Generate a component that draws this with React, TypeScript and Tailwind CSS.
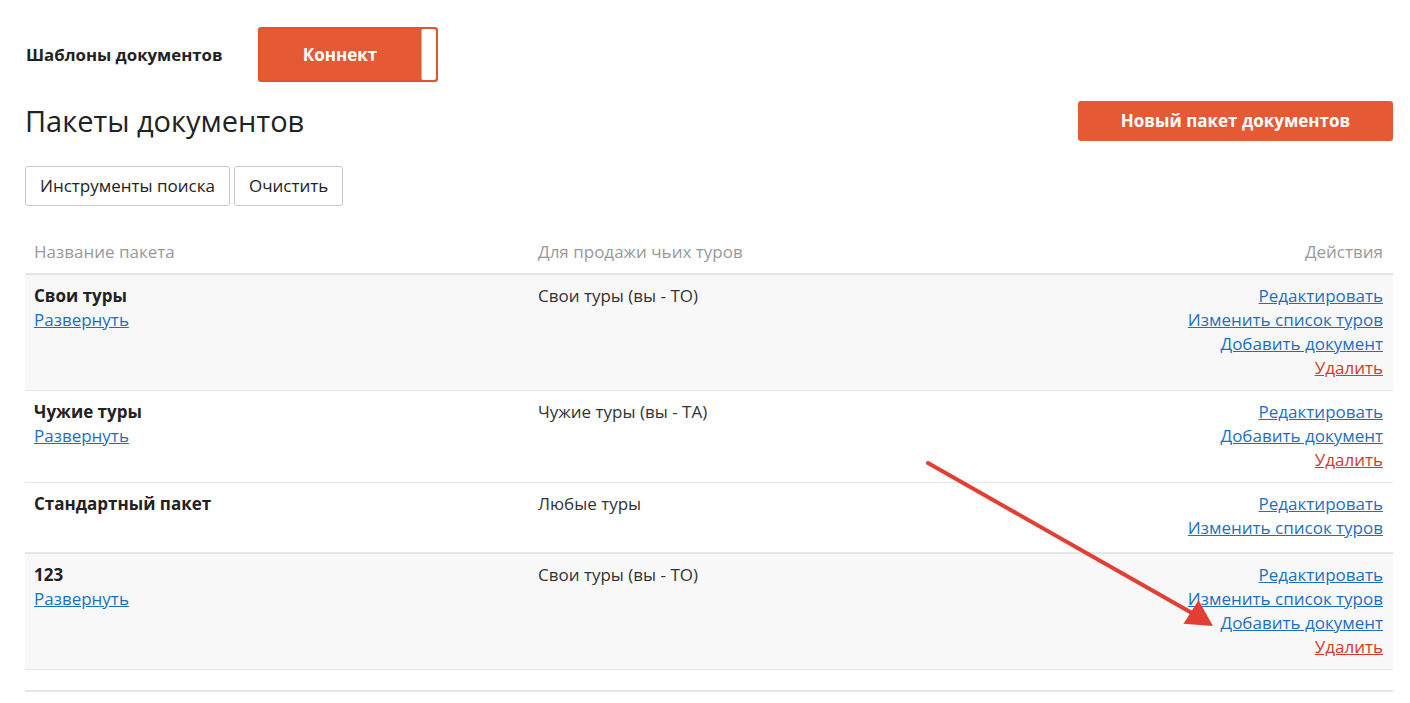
import React from 'react';

type Pack = {
  name: string;
  expand: boolean;
  tours: string;
  actions: string[];
  shaded: boolean;
  last?: boolean;
};

const packs: Pack[] = [
  {
    name: 'Свои туры',
    expand: true,
    tours: 'Свои туры (вы - ТО)',
    actions: ['Редактировать', 'Изменить список туров', 'Добавить документ', 'Удалить'],
    shaded: true,
  },
  {
    name: 'Чужие туры',
    expand: true,
    tours: 'Чужие туры (вы - ТА)',
    actions: ['Редактировать', 'Добавить документ', 'Удалить'],
    shaded: false,
  },
  {
    name: 'Стандартный пакет',
    expand: false,
    tours: 'Любые туры',
    actions: ['Редактировать', 'Изменить список туров'],
    shaded: false,
    last: true,
  },
  {
    name: '123',
    expand: true,
    tours: 'Свои туры (вы - ТО)',
    actions: ['Редактировать', 'Изменить список туров', 'Добавить документ', 'Удалить'],
    shaded: true,
  },
];

const Row: React.FC<{ p: Pack }> = ({ p }) => (
  <div
    className={`grid grid-cols-[504px_1fr_auto] leading-6 text-[17px] ${p.shaded ? 'bg-[#f8f8f8]' : 'bg-white'} ${
      p.last ? 'border-b-2 border-[#e6e6e6] pt-[9px] pb-[12px]' : 'border-b border-[#e8e8e8] pt-[9px] pb-[10px]'
    }`}
  >
    <div className="pl-[9px]">
      <div className="font-bold text-[#222]">{p.name}</div>
      {p.expand && <a className="text-[#1d6fc4] underline cursor-pointer">Развернуть</a>}
    </div>
    <div className="pl-[9px] text-[#333]">{p.tours}</div>
    <div className="pr-[10px] flex flex-col items-end">
      {p.actions.map((a) => (
        <a
          key={a}
          className={`underline cursor-pointer ${a === 'Удалить' ? 'text-[#d63a2c]' : 'text-[#1d6fc4]'}`}
        >
          {a}
        </a>
      ))}
    </div>
  </div>
);

export default function App() {
  return (
    <div className="relative min-h-[703px] bg-white font-['Open_Sans',sans-serif] text-[#333]">
      <div className="pl-[25px] pr-[17px] pt-[27px] pb-[10px]">
        <div className="flex items-center">
          <span className="ml-[1px] text-[16.8px] font-bold text-[#222]">Шаблоны документов</span>
          <div className="ml-[35px] flex h-[55px] w-[180px] rounded-[3px] border-2 border-[#e5532d] bg-[#e55a35] overflow-hidden">
            <div className="flex flex-1 items-center justify-center text-[17px] font-bold text-white">Коннект</div>
            <div className="w-[15px] rounded-[2px] border-l border-[#bbb] bg-white" />
          </div>
        </div>

        <div className="mt-[17px] flex items-center justify-between">
          <h1 className="text-[29px] font-normal text-[#222]">Пакеты документов</h1>
          <button className="h-[40px] w-[315px] rounded-[3px] bg-[#e55a35] text-[17px] font-bold text-white">
            Новый пакет документов
          </button>
        </div>

        <div className="mt-[23px] flex gap-[4px]">
          <button className="h-[40px] rounded-[3px] border border-[#c8c8c8] px-[14px] text-[17px] text-[#222]">
            Инструменты поиска
          </button>
          <button className="h-[40px] rounded-[3px] border border-[#c8c8c8] px-[14px] text-[17px] text-[#222]">
            Очистить
          </button>
        </div>

        <div className="mt-[25px]">
          <div className="grid grid-cols-[504px_1fr_auto] border-b-2 border-[#e6e6e6] py-[9px] leading-6 text-[17px] text-[#999]">
            <div className="pl-[9px]">Название пакета</div>
            <div className="pl-[9px]">Для продажи чьих туров</div>
            <div className="pr-[10px] text-right">Действия</div>
          </div>
          {packs.map((p) => (
            <Row key={p.name} p={p} />
          ))}
          <div className="h-[22px] border-b-2 border-[#e6e6e6]" />
        </div>
      </div>

      <svg className="pointer-events-none absolute left-0 top-0" width="1410" height="703">
        <line x1="928" y1="463" x2="1192" y2="613" stroke="#e43d31" strokeWidth="4" strokeLinecap="round" />
        <polygon points="1213,626 1183.5,623.8 1198.5,600.2" fill="#e43d31" />
      </svg>
    </div>
  );
}
